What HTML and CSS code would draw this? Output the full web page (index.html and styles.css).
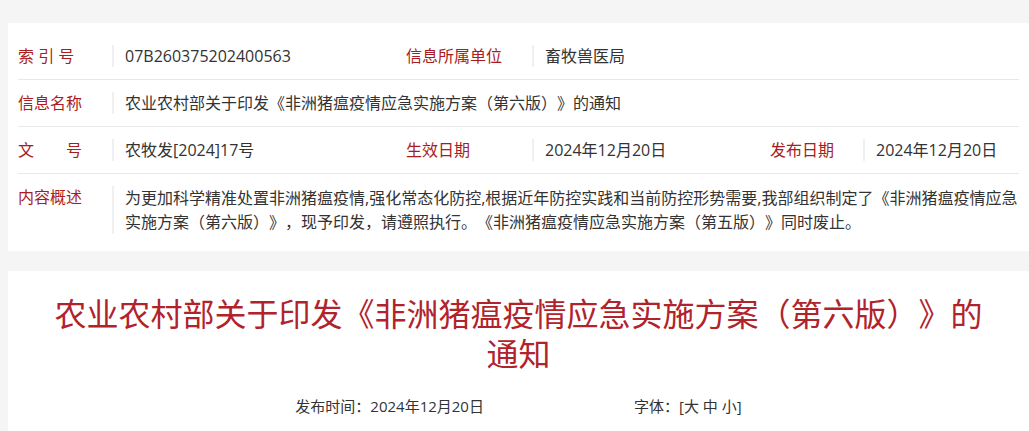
FILE: index.html
```html
<!DOCTYPE html>
<html lang="zh-CN">
<head>
    <meta charset="UTF-8">
    <meta name="viewport" content="width=device-width, initial-scale=1.0">
    <title>农业农村部关于印发《非洲猪瘟疫情应急实施方案（第六版）》的通知</title>
    <link rel="stylesheet" href="styles.css">
</head>
<body>
    <div class="info-card">
        <div class="info-row">
            <div class="info-label">索 引 号</div>
            <div class="info-value">07B260375202400563</div>
            <div class="info-label">信息所属单位</div>
            <div class="info-value">畜牧兽医局</div>
        </div>
        <div class="info-row">
            <div class="info-label">信息名称</div>
            <div class="info-value wide">农业农村部关于印发《非洲猪瘟疫情应急实施方案（第六版）》的通知</div>
        </div>
        <div class="info-row">
            <div class="info-label">文　　号</div>
            <div class="info-value">农牧发[2024]17号</div>
            <div class="info-label">生效日期</div>
            <div class="info-value">2024年12月20日</div>
            <div class="info-label">发布日期</div>
            <div class="info-value">2024年12月20日</div>
        </div>
        <div class="info-row last">
            <div class="info-label">内容概述</div>
            <div class="info-value wide summary">为更加科学精准处置非洲猪瘟疫情,强化常态化防控,根据近年防控实践和当前防控形势需要,我部组织制定了《非洲猪瘟疫情应急实施方案（第六版）》，现予印发，请遵照执行。《非洲猪瘟疫情应急实施方案（第五版）》同时废止。</div>
        </div>
    </div>

    <div class="article-card">
        <h1 class="article-title">农业农村部关于印发《非洲猪瘟疫情应急实施方案（第六版）》的通知</h1>
        <div class="article-meta">
            <span>发布时间：2024年12月20日</span>
            <span>字体：[<a href="#">大</a> <a href="#">中</a> <a href="#">小</a>]</span>
        </div>
    </div>
</body>
</html>
```

FILE: styles.css
```css
body {
    margin: 0;
    padding: 23px 0 0 8px;
    background-color: #f5f5f5;
    font-family: "Open Sans", "Noto Sans CJK SC", sans-serif;
    color: #333;
    overflow: hidden;
    text-spacing-trim: space-all;
}
.info-card {
    background: white;
    padding: 10px 10px 5px 10px;
}
.info-row {
    display: grid;
    grid-template-columns: 94px 294px 126px 238px 93px 1fr;
    border-bottom: 1px solid #e8e8e8;
    font-size: 16px;
}
.info-row.last {
    border-bottom: none;
}
.info-label {
    padding: 12px 0;
    line-height: 22px;
    color: #a81c22;
    white-space: nowrap;
}
.info-value {
    margin: 12px 0;
    padding-left: 11px;
    line-height: 22px;
    border-left: 2px solid #f0f0f0;
    white-space: nowrap;
}
.info-value.wide {
    grid-column: 2 / 7;
}
.info-value.summary {
    white-space: normal;
    line-height: 24px;
}
.article-card {
    background: white;
    margin-top: 20px;
    padding: 23px 20px 40px 20px;
}
.article-title {
    margin: 0;
    text-align: center;
    font-size: 32px;
    font-weight: normal;
    line-height: 40px;
    color: #b1232b;
    padding: 0 26px;
}
.article-meta {
    display: flex;
    justify-content: center;
    gap: 150px;
    margin-top: 22px;
    font-size: 15px;
    line-height: 20px;
    color: #333;
}
.article-meta a {
    color: #333;
    text-decoration: none;
}
```
